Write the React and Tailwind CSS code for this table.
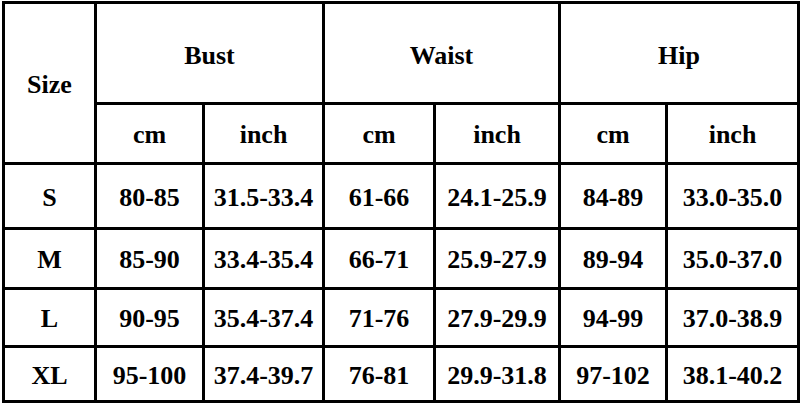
import React from "react";

const rows = [
  ["S", "80-85", "31.5-33.4", "61-66", "24.1-25.9", "84-89", "33.0-35.0"],
  ["M", "85-90", "33.4-35.4", "66-71", "25.9-27.9", "89-94", "35.0-37.0"],
  ["L", "90-95", "35.4-37.4", "71-76", "27.9-29.9", "94-99", "37.0-38.9"],
  ["XL", "95-100", "37.4-39.7", "76-81", "29.9-31.8", "97-102", "38.1-40.2"],
];

function Cell({ children, className = "" }) {
  return (
    <div className={"bg-white flex items-center justify-center " + className}>
      {children}
    </div>
  );
}

export default function App() {
  return (
    <div className="w-[800px] h-[408px] bg-white pt-px pl-[2px]">
      <div className="grid w-[798px] bg-black p-[3px] gap-[3px] grid-cols-[89px_105px_117px_108px_122px_104px_129px] grid-rows-[98px_57px_62px_57px_55px_52px] text-black font-bold text-[26px] leading-none font-['Liberation_Serif','Times_New_Roman',serif]">
        <Cell className="row-span-2 pt-[4px]">Size</Cell>
        <Cell className="col-span-2 pt-[5px]">Bust</Cell>
        <Cell className="col-span-2 pt-[5px]">Waist</Cell>
        <Cell className="col-span-2 pt-[5px]">Hip</Cell>
        <Cell className="pt-[3px]">cm</Cell>
        <Cell className="pt-[3px]">inch</Cell>
        <Cell className="pt-[3px]">cm</Cell>
        <Cell className="pt-[3px]">inch</Cell>
        <Cell className="pt-[3px]">cm</Cell>
        <Cell className="pt-[3px]">inch</Cell>
        {rows.map((r) =>
          r.map((v, i) => (
            <Cell key={r[0] + i} className="pt-[3px]">
              {v}
            </Cell>
          ))
        )}
      </div>
    </div>
  );
}
